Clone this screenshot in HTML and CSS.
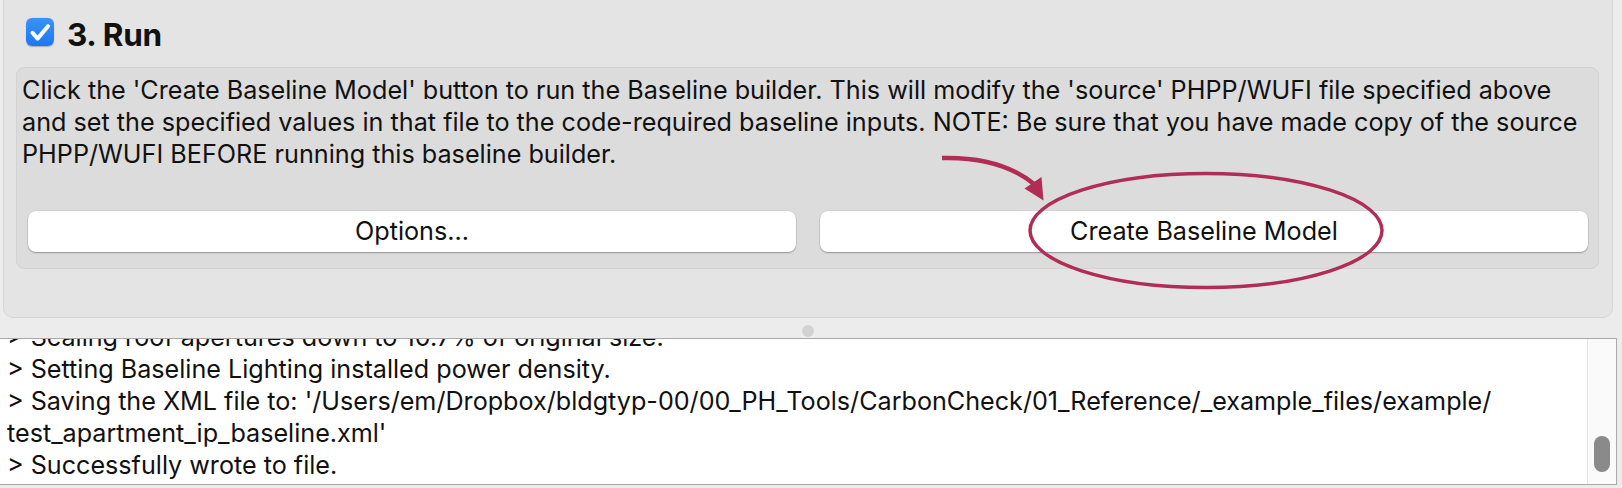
FILE: index.html
```html
<!DOCTYPE html>
<html>
<head>
<meta charset="utf-8">
<link rel="stylesheet" href="styles.css">
</head>
<body>
<div class="window">
  <section class="panel">
    <div class="panel-header">
      <span class="checkbox">
        <svg width="28" height="28" viewBox="0 0 28 28"><path d="M6.5 14.8 L11.6 20.6 L22 8.2" fill="none" stroke="#fff" stroke-width="4" stroke-linecap="round" stroke-linejoin="round"/></svg>
      </span>
      <h2 class="title">3. Run</h2>
    </div>
    <div class="group">
      <p class="desc">Click the 'Create Baseline Model' button to run the Baseline builder. This will modify the 'source' PHPP/WUFI file specified above<br>and set the specified values in that file to the code-required baseline inputs. NOTE: Be sure that you have made copy of the source<br>PHPP/WUFI BEFORE running this baseline builder.</p>
      <div class="buttons">
        <button class="btn">Options...</button>
        <button class="btn">Create Baseline Model</button>
      </div>
    </div>
  </section>
  <div class="splitter"><span class="grip"></span></div>
  <div class="log">
    <div class="log-text">
      <div class="log-line">&gt; Scaling roof apertures down to 10.7% of original size.</div>
      <div class="log-line">&gt; Setting Baseline Lighting installed power density.</div>
      <div class="log-line">&gt; Saving the XML file to: '/Users/em/Dropbox/bldgtyp-00/00_PH_Tools/CarbonCheck/01_Reference/_example_files/example/</div>
      <div class="log-line">test_apartment_ip_baseline.xml'</div>
      <div class="log-line">&gt; Successfully wrote to file.</div>
    </div>
    <div class="scrollbar"><span class="thumb"></span></div>
  </div>
</div>
<svg class="annotation" width="1622" height="488" viewBox="0 0 1622 488">
  <ellipse cx="1206" cy="230.5" rx="176" ry="57" fill="none" stroke="#b12d56" stroke-width="3.5"/>
  <path d="M942 158 C 982 157, 1012 166, 1034 184" fill="none" stroke="#b12d56" stroke-width="4.5"/>
  <polygon points="1043.5,200.5 1024.5,188.5 1041.5,177" fill="#b12d56"/>
</svg>
</body>
</html>
```
FILE: styles.css
```css
* { box-sizing: border-box; }
html, body {
  margin: 0;
  padding: 0;
}
body {
  width: 1622px;
  height: 488px;
  overflow: hidden;
  background: #ececec;
  font-family: Inter, "Liberation Sans", Arial, sans-serif;
  color: #111;
  position: relative;
}
.window {
  display: flex;
  flex-direction: column;
  height: 488px;
}
.panel {
  margin: -12px 9px 0 3px;
  background: #e4e4e4;
  border: 1px solid #d6d6d6;
  border-radius: 10px;
  padding: 29px 13px 48px 12px;
}
.panel-header {
  display: flex;
  align-items: flex-start;
  gap: 13px;
  padding-left: 10px;
}
.checkbox {
  width: 28px;
  height: 28px;
  border-radius: 6px;
  background: linear-gradient(#3a92f9, #1e77f3);
  box-shadow: 0 0.5px 1px rgba(0,0,0,0.25);
  display: flex;
}
.title {
  margin: 0;
  font-size: 31.5px;
  line-height: 34px;
  font-weight: 700;
  letter-spacing: -0.3px;
}
.group {
  margin-top: 15px;
  background: #dcdcdc;
  border: 1px solid #d3d3d3;
  border-radius: 8px;
  padding: 6px 5px 16px 5px;
}
.desc {
  margin: 0;
  font-size: 25.2px;
  line-height: 32px;
  white-space: nowrap;
}
.buttons {
  display: flex;
  gap: 24px;
  margin-top: 41px;
  padding: 0 5px 0 6px;
}
.btn {
  flex: 1;
  height: 41px;
  border: none;
  border-radius: 8px;
  background: #fff;
  box-shadow: 0 1px 1.5px rgba(0,0,0,0.3), 0 0 0 0.5px rgba(0,0,0,0.08);
  font-family: inherit;
  font-size: 25.2px;
  line-height: 41px;
  color: #111;
  padding: 0;
}
.splitter {
  height: 20px;
  margin: 0 9px 0 3px;
  display: flex;
  justify-content: center;
  padding-top: 7px;
}
.grip {
  width: 12px;
  height: 12px;
  border-radius: 50%;
  background: #d2d2d2;
}
.log {
  height: 147px;
  margin: 0 5px 0 -1px;
  border: 1px solid #a9a9a9;
  background: #fff;
  display: flex;
}
.log-text {
  flex: 1;
  overflow: hidden;
  display: flex;
  flex-direction: column;
  justify-content: flex-end;
  padding: 0 0 3px 7px;
  font-size: 25.15px;
  line-height: 32px;
  white-space: nowrap;
}
.scrollbar {
  width: 29px;
  border-left: 1px solid #e6e6e6;
  background: #fafafa;
  display: flex;
  flex-direction: column;
  justify-content: flex-end;
  align-items: center;
  padding-bottom: 12px;
}
.thumb {
  width: 16px;
  height: 36px;
  border-radius: 8px;
  background: #8a8a8a;
}
.annotation {
  position: absolute;
  top: 0;
  left: 0;
  pointer-events: none;
}
```
